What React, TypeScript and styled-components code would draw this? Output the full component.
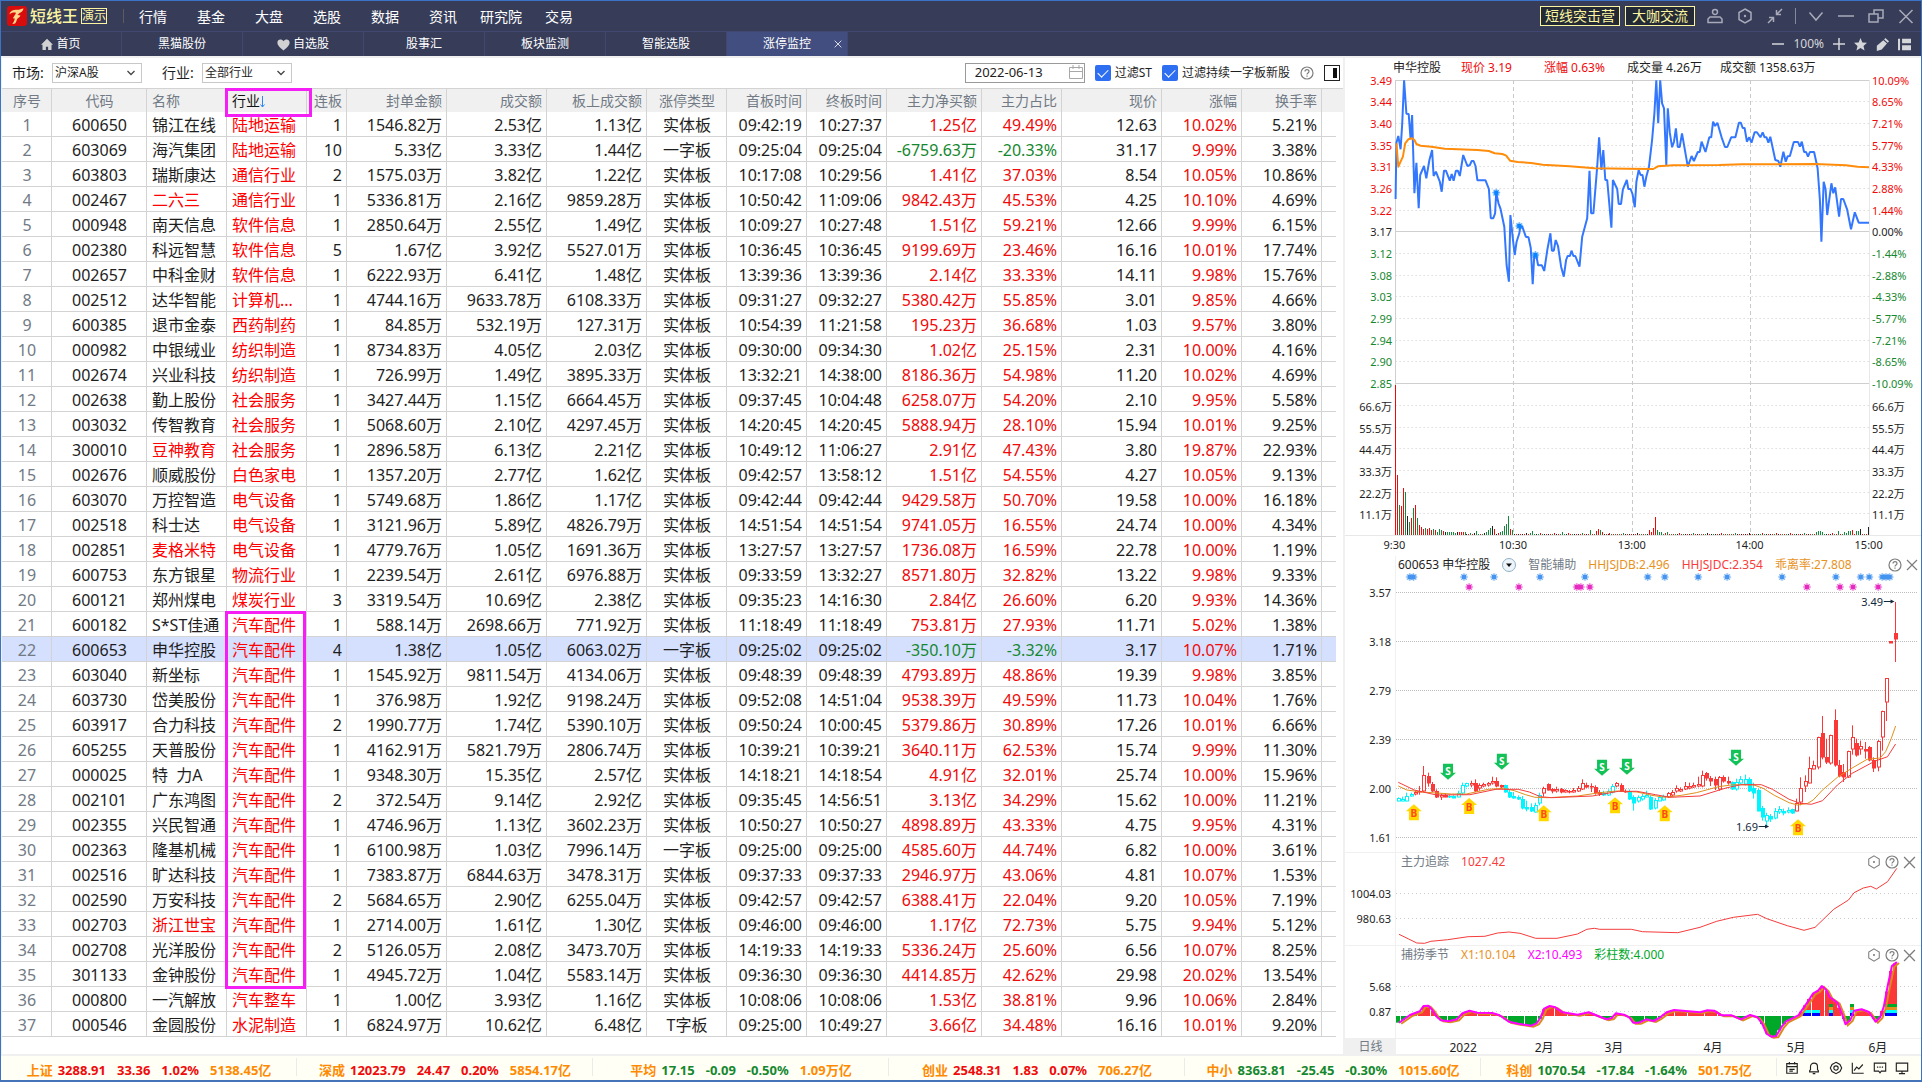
import React from "react";
import styled, { createGlobalStyle } from "styled-components";

/* ---------- palette ---------- */
const C = {
  bar: "#373d59",
  barLine: "#404872",
  tabActive: "#434e80",
  gold: "#fcf5a0",
  line: "#d3d3d3",
  soft: "#f0f0f0",
  text: "#1e1e1e",
  muted: "#717a85",
  up: "#f00a0a",
  down: "#15882f",
  industry: "#ff0000",
  orange: "#ff8a00",
  mark: "#f51ef5",
};

const Global = createGlobalStyle`
  * { box-sizing: border-box; }
  body {
    margin: 0;
    background: #fff;
    color: ${C.text};
    font-family: "Noto Sans", "Noto Sans CJK SC", sans-serif;
    font-size: 12px;
    line-height: 16px;
  }
  button, input, select { font: inherit; color: inherit; margin: 0; }
  button { background: none; border: 0; padding: 0; cursor: pointer; }
  a { color: inherit; text-decoration: none; }
  svg { display: block; }
`;

const Window = styled.div`
  min-height: 100vh;
  display: flex;
  flex-direction: column;
  border: 1px solid #3b74c6;
  border-bottom: 2px solid #4573b8;
`;

/* ---------- top bars ---------- */
const TopBar = styled.header`
  display: flex;
  align-items: center;
  height: 31px;
  background: ${C.bar};
  border-bottom: 1px solid ${C.barLine};
`;

const Brand = styled.div`
  display: flex;
  align-items: center;
  gap: 3px;
  width: 123px;
  padding-left: 6px;
  color: ${C.gold};
  font-size: 16px;
  font-weight: 500;
  border-right: 1px solid #5d5b5e;
  height: 14px;
`;

const DemoTag = styled.span`
  width: 26px;
  border: 1px solid ${C.gold};
  font-size: 12px;
  font-weight: 400;
  line-height: 14px;
  text-align: center;
`;

const Menu = styled.nav`
  display: flex;
  flex: 1;
`;

const MenuLink = styled.a`
  width: 58px;
  padding-top: 2px;
  text-align: center;
  font-size: 14px;
  line-height: 20px;
  color: #fff;
`;

const PromoButton = styled.button<{ $w: number }>`
  width: ${(p) => p.$w}px;
  height: 20px;
  margin-right: 5px;
  border: 1px solid ${C.gold};
  background: #232a35;
  color: ${C.gold};
  font-size: 14px;
  line-height: 18px;
`;

const WinButton = styled.button`
  display: grid;
  place-items: center;
  width: 30px;
  height: 30px;
  color: #a9abb8;
`;

const Rule = styled.span`
  width: 1px;
  height: 16px;
  margin: 0 5px;
  background: #85899a;
`;

const TabBar = styled.nav`
  display: flex;
  height: 24px;
  background: ${C.bar};
`;

const Tab = styled.a<{ $active?: boolean }>`
  position: relative;
  display: flex;
  align-items: center;
  justify-content: center;
  gap: 3px;
  width: 121px;
  color: #fff;
  background: ${(p) => (p.$active ? C.tabActive : "transparent")};
  border-right: 1px solid ${C.barLine};
  > svg { color: #d2d2d2; }
`;

const TabClose = styled.button`
  position: absolute;
  right: 5px;
  top: 8px;
  color: #fff;
`;

const TabTools = styled.div`
  display: flex;
  align-items: center;
  gap: 9px;
  margin-left: auto;
  padding-right: 10px;
  color: #d5d6da;
`;

const ToolButton = styled.button`
  color: #d5d6da;
`;

/* ---------- body layout ---------- */
const Main = styled.main`
  flex: 1;
  display: flex;
  border-top: 2px solid ${C.soft};
  border-left: 1px solid ${C.soft};
`;

const Left = styled.section`
  flex: 1;
  min-width: 0;
`;

const Toolbar = styled.form`
  display: flex;
  align-items: center;
  height: 30px;
  padding: 0 3px 0 10px;
`;

const FieldLabel = styled.label`
  width: 40px;
  font-size: 14px;
`;

const SelectBox = styled.span`
  position: relative;
  width: 90px;
  margin-right: 20px;
  svg {
    position: absolute;
    right: 7px;
    top: 6px;
    color: #444;
    pointer-events: none;
  }
`;

const Select = styled.select`
  display: block;
  appearance: none;
  width: 100%;
  height: 20px;
  padding: 0 2px;
  border: 1px solid #c8c8c8;
  border-radius: 0;
  background: #fff;
`;

const DateBox = styled.span`
  position: relative;
  margin-left: auto;
  margin-right: 10px;
  svg {
    position: absolute;
    right: 2px;
    top: 2px;
  }
`;

const DateInput = styled.input`
  display: block;
  width: 120px;
  height: 20px;
  padding: 0 9px 3px;
  border: 1px solid #9a9a9a;
  font-size: 13px;
`;

const Check = styled.label`
  display: flex;
  align-items: center;
  gap: 4px;
  margin-right: 10px;
`;

const CheckInput = styled.input`
  appearance: none;
  width: 16px;
  height: 16px;
  border-radius: 2px;
  background: #2e6ff2;
  display: grid;
  place-items: center;
  &:checked::after {
    content: "";
    width: 9px;
    height: 5px;
    border: solid #fff;
    border-width: 0 0 1px 1px;
    transform: translateY(-1px) rotate(-45deg);
  }
`;

const IconButton = styled.button`
  color: #7d7d7d;
`;

const PaneToggle = styled.button`
  display: flex;
  justify-content: flex-end;
  align-items: center;
  width: 16px;
  height: 16px;
  margin-left: 10px;
  padding: 2px;
  border: 1px solid #222;
  &::after {
    content: "";
    width: 4px;
    height: 10px;
    background: #111;
  }
`;

/* ---------- stock table ---------- */
const Table = styled.table`
  width: 100%;
  table-layout: fixed;
  border-collapse: separate;
  border-spacing: 0;
  color: ${C.text};
`;

type Align = "left" | "center" | "right";

const Th = styled.th<{ $a: Align; $dark?: boolean }>`
  position: relative;
  height: 24px;
  padding: 0 4px 0 5px;
  background: ${C.soft};
  border-top: 1px solid ${C.line};
  border-right: 1px solid ${C.line};
  color: ${(p) => (p.$dark ? "#111" : C.muted)};
  font-size: 14px;
  font-weight: 400;
  line-height: 22px;
  text-align: ${(p) => p.$a};
  white-space: nowrap;
  &:nth-last-child(-n + 2) {
    border-right: 0;
  }
`;

const SortArrow = styled.svg`
  display: inline-block;
  vertical-align: -2px;
`;

const Row = styled.tr<{ $on?: boolean }>`
  td:not(:last-child) {
    background: ${(p) => (p.$on ? "#d5e0ff" : "transparent")};
    border-bottom: 1px solid ${C.line};
  }
  td:nth-last-child(2) {
    border-right: 0;
  }
`;

const Td = styled.td<{ $a: Align; $c?: string }>`
  position: relative;
  height: 25px;
  padding: 2px 4px 0 5px;
  border-right: 1px solid ${C.line};
  color: ${(p) => p.$c ?? C.text};
  font-size: 16px;
  line-height: 22px;
  text-align: ${(p) => p.$a};
  white-space: pre;
  &:last-child {
    border-right: 0;
  }
`;

const Highlight = styled.span<{ $w: number; $h: number }>`
  position: absolute;
  z-index: 2;
  left: -2px;
  top: -1px;
  width: ${(p) => p.$w}px;
  height: ${(p) => p.$h}px;
  border: 3px solid ${C.mark};
  pointer-events: none;
`;

const COLS: { t: string; w?: number; a: Align }[] = [
  { t: "序号", w: 50, a: "center" },
  { t: "代码", w: 95, a: "center" },
  { t: "名称", w: 80, a: "left" },
  { t: "行业", w: 80, a: "left" },
  { t: "连板", w: 40, a: "right" },
  { t: "封单金额", w: 100, a: "right" },
  { t: "成交额", w: 100, a: "right" },
  { t: "板上成交额", w: 100, a: "right" },
  { t: "涨停类型", w: 80, a: "center" },
  { t: "首板时间", w: 80, a: "right" },
  { t: "终板时间", w: 80, a: "right" },
  { t: "主力净买额", w: 95, a: "right" },
  { t: "主力占比", w: 80, a: "right" },
  { t: "现价", w: 100, a: "right" },
  { t: "涨幅", w: 80, a: "right" },
  { t: "换手率", w: 80, a: "right" },
];

const STOCKS = `600650|锦江在线|陆地运输|1|1546.82万|2.53亿|1.13亿|实体板|09:42:19|10:27:37|1.25亿|49.49%|12.63|10.02%|5.21%
603069|海汽集团|陆地运输|10|5.33亿|3.33亿|1.44亿|一字板|09:25:04|09:25:04|-6759.63万|-20.33%|31.17|9.99%|3.38%
603803|瑞斯康达|通信行业|2|1575.03万|3.82亿|1.22亿|实体板|10:17:08|10:29:56|1.41亿|37.03%|8.54|10.05%|10.86%
002467|二六三|通信行业|1|5336.81万|2.16亿|9859.28万|实体板|10:50:42|11:09:06|9842.43万|45.53%|4.25|10.10%|4.69%
000948|南天信息|软件信息|1|2850.64万|2.55亿|1.49亿|实体板|10:09:27|10:27:48|1.51亿|59.21%|12.66|9.99%|6.15%
002380|科远智慧|软件信息|5|1.67亿|3.92亿|5527.01万|实体板|10:36:45|10:36:45|9199.69万|23.46%|16.16|10.01%|17.74%
002657|中科金财|软件信息|1|6222.93万|6.41亿|1.48亿|实体板|13:39:36|13:39:36|2.14亿|33.33%|14.11|9.98%|15.76%
002512|达华智能|计算机...|1|4744.16万|9633.78万|6108.33万|实体板|09:31:27|09:32:27|5380.42万|55.85%|3.01|9.85%|4.66%
600385|退市金泰|西药制药|1|84.85万|532.19万|127.31万|实体板|10:54:39|11:21:58|195.23万|36.68%|1.03|9.57%|3.80%
000982|中银绒业|纺织制造|1|8734.83万|4.05亿|2.03亿|实体板|09:30:00|09:34:30|1.02亿|25.15%|2.31|10.00%|4.16%
002674|兴业科技|纺织制造|1|726.99万|1.49亿|3895.33万|实体板|13:32:21|14:38:00|8186.36万|54.98%|11.20|10.02%|4.69%
002638|勤上股份|社会服务|1|3427.44万|1.15亿|6664.45万|实体板|09:37:45|10:04:48|6258.07万|54.20%|2.10|9.95%|5.58%
003032|传智教育|社会服务|1|5068.60万|2.10亿|4297.45万|实体板|14:20:45|14:20:45|5888.94万|28.10%|15.94|10.01%|9.25%
300010|豆神教育|社会服务|1|2896.58万|6.13亿|2.21亿|实体板|10:49:12|11:06:27|2.91亿|47.43%|3.80|19.87%|22.93%
002676|顺威股份|白色家电|1|1357.20万|2.77亿|1.62亿|实体板|09:42:57|13:58:12|1.51亿|54.55%|4.27|10.05%|9.13%
603070|万控智造|电气设备|1|5749.68万|1.86亿|1.17亿|实体板|09:42:44|09:42:44|9429.58万|50.70%|19.58|10.00%|16.18%
002518|科士达|电气设备|1|3121.96万|5.89亿|4826.79万|实体板|14:51:54|14:51:54|9741.05万|16.55%|24.74|10.00%|4.34%
002851|麦格米特|电气设备|1|4779.76万|1.05亿|1691.36万|实体板|13:27:57|13:27:57|1736.08万|16.59%|22.78|10.00%|1.19%
600753|东方银星|物流行业|1|2239.54万|2.61亿|6976.88万|实体板|09:33:59|13:32:27|8571.80万|32.82%|13.22|9.98%|9.33%
600121|郑州煤电|煤炭行业|3|3319.54万|10.69亿|2.38亿|实体板|09:35:23|14:16:30|2.84亿|26.60%|6.20|9.93%|14.36%
600182|S*ST佳通|汽车配件|1|588.14万|2698.66万|771.92万|实体板|11:18:49|11:18:49|753.81万|27.93%|11.71|5.02%|1.38%
600653|申华控股|汽车配件|4|1.38亿|1.05亿|6063.02万|一字板|09:25:02|09:25:02|-350.10万|-3.32%|3.17|10.07%|1.71%
603040|新坐标|汽车配件|1|1545.92万|9811.54万|4134.06万|实体板|09:48:39|09:48:39|4793.89万|48.86%|19.39|9.98%|3.85%
603730|岱美股份|汽车配件|1|376.98万|1.92亿|9198.24万|实体板|09:52:08|14:51:04|9538.39万|49.59%|11.73|10.04%|1.76%
603917|合力科技|汽车配件|2|1990.77万|1.74亿|5390.10万|实体板|09:50:24|10:00:45|5379.86万|30.89%|17.26|10.01%|6.66%
605255|天普股份|汽车配件|1|4162.91万|5821.79万|2806.74万|实体板|10:39:21|10:39:21|3640.11万|62.53%|15.74|9.99%|11.30%
000025|特  力A|汽车配件|1|9348.30万|15.35亿|2.57亿|实体板|14:18:21|14:18:54|4.91亿|32.01%|25.74|10.00%|15.96%
002101|广东鸿图|汽车配件|2|372.54万|9.14亿|2.92亿|实体板|09:35:45|14:56:51|3.13亿|34.29%|15.62|10.00%|11.21%
002355|兴民智通|汽车配件|1|4746.96万|1.13亿|3602.23万|实体板|10:50:27|10:50:27|4898.89万|43.33%|4.75|9.95%|4.31%
002363|隆基机械|汽车配件|1|6100.98万|1.03亿|7996.14万|一字板|09:25:00|09:25:00|4585.60万|44.74%|6.82|10.00%|3.61%
002516|旷达科技|汽车配件|1|7383.87万|6844.63万|3478.31万|实体板|09:37:33|09:37:33|2946.97万|43.06%|4.81|10.07%|1.53%
002590|万安科技|汽车配件|2|5684.65万|2.90亿|6255.04万|实体板|09:42:57|09:42:57|6388.41万|22.04%|9.20|10.05%|7.19%
002703|浙江世宝|汽车配件|1|2714.00万|1.61亿|1.30亿|实体板|09:46:00|09:46:00|1.17亿|72.73%|5.75|9.94%|5.12%
002708|光洋股份|汽车配件|2|5126.05万|2.08亿|3473.70万|实体板|14:19:33|14:19:33|5336.24万|25.60%|6.56|10.07%|8.25%
301133|金钟股份|汽车配件|1|4945.72万|1.04亿|5583.14万|实体板|09:36:30|09:36:30|4414.85万|42.62%|29.98|20.02%|13.54%
000800|一汽解放|汽车整车|1|1.00亿|3.93亿|1.16亿|实体板|10:08:06|10:08:06|1.53亿|38.81%|9.96|10.06%|2.84%
000546|金圆股份|水泥制造|1|6824.97万|10.62亿|6.48亿|T字板|09:25:00|10:49:27|3.66亿|34.48%|16.16|10.01%|9.20%`
  .split("\n")
  .map((l) => l.split("|"));

const RED_NAMES = ["002467", "300010", "002851", "002703"];

function cellColor(col: number, value: string, code: string) {
  if (col === 0) return C.muted;
  if (col === 2 && RED_NAMES.includes(code)) return C.industry;
  if (col === 3) return C.industry;
  if (col === 11 || col === 12) return value.startsWith("-") ? C.down : C.up;
  if (col === 14) return C.up;
  return undefined;
}

function StockTable() {
  return (
    <Table>
      <colgroup>
        {COLS.map((c) => (
          <col key={c.t} style={{ width: c.w }} />
        ))}
        <col />
        <col style={{ width: 7 }} />
      </colgroup>
      <thead>
        <tr>
          {COLS.map((c, i) => (
            <Th key={c.t} $a={c.a} $dark={i === 3} scope="col">
              {c.t}
              {i === 3 && (
                <SortArrow width="5" height="12" viewBox="0 0 5 12" fill="none" stroke="#2f86f0">
                  <path d="M2.500 0v11M.5 8.500l2 2.500 2-2.500" />
                </SortArrow>
              )}
              {i === 3 && <Highlight $w={87} $h={29} />}
            </Th>
          ))}
          <Th $a="left" />
          <Th $a="left" />
        </tr>
      </thead>
      <tbody>
        {STOCKS.map((s, r) => {
          const cells = [String(r + 1), ...s];
          return (
            <Row key={s[0]} $on={s[0] === "600653"}>
              {cells.map((v, i) => (
                <Td key={i} $a={COLS[i].a} $c={cellColor(i, v, s[0])}>
                  {v}
                  {i === 3 && s[0] === "600182" && <Highlight $w={81} $h={378} />}
                </Td>
              ))}
              <Td $a="left" />
              <Td $a="left" />
            </Row>
          );
        })}
      </tbody>
    </Table>
  );
}

/* ---------- icons ---------- */
const HexIcon = ({ s = 16, w = 1.5 }: { s?: number; w?: number }) => (
  <svg width={s} height={s} viewBox="0 0 16 16" fill="none" stroke="currentColor" strokeWidth={w}>
    <path d="M8 1l6 3.5v7L8 15l-6-3.5v-7z" />
    <circle cx="8" cy="8" r="1.2" fill="currentColor" stroke="none" />
  </svg>
);
const HelpIcon = () => (
  <svg width="14" height="14" viewBox="0 0 14 14" fill="none" stroke="currentColor" strokeWidth="1.2">
    <circle cx="7" cy="7" r="6" />
    <path d="M5 5.6c0-2.6 4-2.6 4-.2C9 7 7 6.900 7 8.500M7 9.600v1.200" />
  </svg>
);
const CrossIcon = ({ s = 12 }: { s?: number }) => (
  <svg width={s} height={s} viewBox="0 0 12 12" fill="none" stroke="currentColor" strokeWidth="1.200">
    <path d="M1 1l10 10M11 1L1 11" />
  </svg>
);
const Glyph = ({ d, s = 16, w = 1.5, fill }: { d: string; s?: number; w?: number; fill?: boolean }) => (
  <svg
    width={s}
    height={s}
    viewBox="0 0 16 16"
    fill={fill ? "currentColor" : "none"}
    stroke={fill ? "none" : "currentColor"}
    strokeWidth={w}
  >
    <path d={d} />
  </svg>
);
const Logo = () => (
  <svg width="20" height="20" viewBox="0 0 20 20">
    <rect width="20" height="20" rx="3" fill="#d80c0c" />
    <path
      d="M2.500 8.500C3 5 6 3.800 10 3.800c2.500 0 4.500-1 6.500-1.300-.3 2.300-2 3.800-3.700 4.300L10.500 9l3 .6c-.5 1.600-2 2.200-3.200 3.200-.8 1.700-1 3.200-2 4.400-1 .6-2 .8-3 .6 1.700-1.500 2-3.300 2.500-5.300l-2-.2c1-1.900 2.700-3.500 3.200-5.600C6.500 6.300 4.200 6.500 2.500 8.500z"
      fill="#ffd68a"
    />
  </svg>
);

/* ---------- chart pane ---------- */
const Right = styled.aside`
  flex: 0 0 578px;
  border-left: 2px solid ${C.soft};
`;

const QuoteLine = styled.div`
  display: grid;
  grid-template-columns: 68px 83px 83px 93px auto;
  height: 18px;
  padding-left: 48px;
  line-height: 20px;
`;

const PaneHead = styled.div<{ $pad: number; $right: number }>`
  display: flex;
  align-items: center;
  gap: 12px;
  height: 18px;
  padding-left: ${(p) => p.$pad}px;
  padding-right: ${(p) => p.$right}px;
  background: linear-gradient(${C.soft}, ${C.soft}) 50px 0 / 1px 100% no-repeat;
`;

const Tint = styled.span<{ $c: string }>`
  color: ${(p) => p.$c};
`;

const PaneIcons = styled.span`
  display: flex;
  align-items: center;
  gap: 4px;
  margin-left: auto;
  color: #777;
`;

const Chart = styled.svg<{ $ruled?: boolean }>`
  width: 100%;
  height: auto;
  overflow: visible;
  border-bottom: ${(p) => (p.$ruled ? `1px solid ${C.soft}` : "0")};
  font-size: 11px;
`;

const PeriodRow = styled.div`
  display: flex;
  height: 15px;
`;

const Period = styled.button`
  width: 51px;
  background: ${C.soft};
  color: ${C.muted};
`;

const Months = styled.div`
  position: relative;
  flex: 1;
  line-height: 17px;
`;

const Month = styled.span`
  position: absolute;
  transform: translateX(-50%);
`;

type Pt = [number, number];
const pairs = (s: string): Pt[] => s.split(" ").map((p) => p.split(",").map(Number) as Pt);

/* sampled grid -> chart pixels */
const KX = 0.38393;
const tx = (x: number) => x * KX - 25;
const ty = (y: number) => y / 3 - 76;
const JX = 0.37117;
const kx = (x: number) => x * JX - 5;
const ky = (y: number) => y / 3 - 34;
const my = (y: number) => y / 3 - 31;
const by = (y: number) => y / 3 - 124;

const poly = (pts: Pt[], fx: (n: number) => number, fy: (n: number) => number) =>
  pts.map(([x, y]) => `${fx(x).toFixed(1)},${fy(y).toFixed(1)}`).join(" ");

const PRICE = pairs(
  "197,597 199,428 204,408 210,448 214,372 219,241 225,341 231,342 236,418 240,345 246,580 251,488 257,625 261,525 271,498 277,535 285,480 292,450 296,528 302,515 312,545 317,575 323,512 328,512 338,542 343,522 348,542 354,512 359,512 364,528 373,465 384,498 390,496 395,483 400,483 405,498 410,541 431,541 440,567 445,655 451,655 456,640 459,578 465,610 470,625 480,680 486,795 492,845 496,645 502,712 507,765 512,725 519,700 522,678 527,680 536,710 543,712 549,745 554,853 558,770 563,765 568,796 578,796 584,813 592,750 600,700 604,752 609,752 614,720 620,738 628,800 635,830 641,780 645,768 651,768 655,752 660,768 665,768 676,800 683,710 696,655 702,512 706,640 712,640 722,500 727,412 733,510 738,450 743,540 748,540 759,683 763,540 774,567 778,612 784,612 789,568 799,540 803,567 809,567 814,582 820,622 824,545 830,510 835,525 840,525 845,560 850,530 857,500 865,420 871,340 876,241 881,370 886,241 891,310 896,325 902,495 906,325 911,398 917,442 922,425 927,385 932,441 937,441 943,400 958,500 968,468 974,483 984,456 989,456 994,425 1004,456 1014,412 1019,412 1024,365 1029,378 1035,368 1046,412 1055,441 1061,441 1071,412 1082,412 1091,368 1096,368 1101,384 1106,384 1112,425 1118,412 1124,428 1132,397 1138,397 1147,412 1153,397 1158,412 1163,412 1168,428 1173,410 1186,480 1194,483 1199,500 1207,455 1213,485 1218,469 1224,468 1234,426 1245,426 1250,440 1255,425 1261,456 1266,456 1271,470 1276,456 1287,456 1296,505 1302,600 1306,725 1312,545 1317,568 1321,645 1332,550 1337,580 1342,562 1352,650 1357,597 1363,597 1373,628 1383,688 1393,637 1403,668 1430,668"
);
const AVERAGE = pairs(
  "199,430 204,500 216,470 222,430 230,418 240,415 246,420 251,432 262,437 290,440 325,446 410,450 440,453 455,460 475,462 485,467 495,482 515,486 550,489 580,494 650,499 715,505 800,506 868,507 880,499 920,496 1040,495 1100,493 1290,492 1370,496 1400,500 1430,502"
);
const LEFT_AXIS = "3.49 3.44 3.40 3.35 3.31 3.26 3.22 3.17 3.12 3.08 3.03 2.99 2.94 2.90 2.85".split(" ");
const RIGHT_AXIS =
  "10.09% 8.65% 7.21% 5.77% 4.33% 2.88% 1.44% 0.00% -1.44% -2.88% -4.33% -5.77% -7.21% -8.65% -10.09%".split(" ");
const VOL_AXIS = ["66.6万", "55.5万", "44.4万", "33.3万", "22.2万", "11.1万"];

/* slot -> bar height and colour; slots left out get a minimal bar */
const VOL_PEAKS: Record<number, [number, string]> = {
  0: [150, "r"], 1: [60, "r"], 2: [30, "g"], 3: [29, "r"], 4: [47, "r"], 5: [43, "g"], 6: [19, "k"], 7: [13, "g"],
  8: [17, "r"], 9: [27, "g"], 10: [30, "r"], 11: [17, "g"], 12: [10, "r"], 13: [8, "r"], 14: [6, "r"], 15: [7, "g"],
  16: [6, "r"], 17: [7, "r"], 18: [5, "r"], 19: [6, "g"], 20: [5, "r"], 21: [3, "g"], 22: [6, "g"], 23: [5, "g"],
  24: [4, "r"], 25: [3, "k"], 26: [3, "g"], 27: [3, "g"], 28: [3, "g"], 29: [3, "g"], 30: [2, "g"], 31: [3, "k"],
  32: [3, "r"], 33: [3, "r"], 34: [3, "r"], 35: [3, "g"], 40: [2, "k"], 41: [4, "g"], 46: [3, "g"], 47: [5, "g"],
  48: [7, "g"], 49: [9, "k"], 50: [6, "r"], 53: [3, "g"], 54: [4, "g"], 55: [9, "g"], 56: [11, "g"], 57: [19, "g"],
  58: [6, "r"], 59: [5, "g"], 68: [2, "g"], 69: [4, "g"], 84: [3, "g"], 98: [5, "g"], 101: [4, "r"], 102: [6, "r"],
  103: [5, "g"], 104: [3, "r"], 128: [5, "r"], 129: [3, "r"], 130: [7, "r"], 131: [18, "r"], 132: [5, "g"],
  133: [3, "g"], 134: [3, "g"], 137: [3, "g"], 212: [3, "g"], 213: [4, "g"], 214: [4, "g"], 215: [3, "g"],
  220: [2, "r"], 223: [4, "g"], 226: [3, "g"], 228: [4, "g"], 229: [4, "g"], 230: [5, "r"], 232: [4, "g"],
  233: [4, "g"], 234: [6, "k"], 238: [8, "k"],
};
const VOL_COLORS: Record<string, string> = { r: "#ee0a0a", g: "#138a3c", k: "#222" };

const Spark = ({ x, y, c }: { x: number; y: number; c: string }) => (
  <g>
    <circle cx={x} cy={y} r="3.500" fill={c} opacity="0.35" />
    <path d={`M${x - 4} ${y}h8M${x} ${y - 4}v8M${x - 3} ${y - 3}l6 6M${x + 3} ${y - 3}l-6 6`} stroke={c} opacity="0.5" />
    <rect x={x - 2} y={y - 2} width="4" height="4" fill={c} />
  </g>
);

function Intraday() {
  const x0 = tx(197);
  const x1 = tx(1431);
  const step = (383.3 - 80.3) / 14;
  return (
    <Chart viewBox="0 0 576 480" role="img" aria-label="分时走势">
      {LEFT_AXIS.map((v, i) => {
        const y = Math.floor(4.3 + i * step) + 0.5;
        const solid = i % 7 === 0;
        const c = i < 7 ? C.up : i === 7 ? C.text : C.down;
        return (
          <g key={v}>
            <line x1={x0} x2={x1} y1={y} y2={y} stroke={solid ? "#cfcfcf" : "#cccccc"} strokeDasharray={solid ? undefined : "1 3"} />
            <text x="47" y={y + 4} textAnchor="end" fill={c}>{v}</text>
            <text x="527" y={y + 4} fill={c}>{RIGHT_AXIS[i]}</text>
          </g>
        );
      })}
      {VOL_AXIS.map((v, i) => {
        const y = Math.floor(329.7 + i * 21.6) + 0.5;
        return (
          <g key={v} fill={C.text}>
            <line x1={x0} x2={x1} y1={y} y2={y} stroke="#cccccc" strokeDasharray="1 3" />
            <text x="47" y={y + 5} textAnchor="end">{v}</text>
            <text x="527" y={y + 5}>{v}</text>
          </g>
        );
      })}
      {[504, 814, 1121].map((x) => (
        <line key={x} x1={Math.floor(tx(x)) + 0.5} x2={Math.floor(tx(x)) + 0.5} y1="4" y2="459" stroke="#c9c9c9" strokeDasharray="4 3" />
      ))}
      <line x1="50.5" x2="50.5" y1="4" y2="459" stroke="#cfcfcf" />
      <line x1="524.5" x2="524.5" y1="4" y2="459" stroke="#e8e8e8" />
      <line x1="0" x2="576" y1="459.5" y2="459.5" stroke="#e8e8e8" />
      {Array.from({ length: 239 }, (_, i) => {
        const filler: [number, string] = [i % 7 === 3 ? 2 : 1, "rgkrrgk"[(i * 5 + (i >> 3)) % 7]];
        const [h, c] = VOL_PEAKS[i] ?? filler;
        return <rect key={i} x={Math.round(50 + i * 1.986)} y={459 - h} width="1" height={h} fill={VOL_COLORS[c]} />;
      })}
      <polyline points={poly(PRICE, tx, ty)} fill="none" stroke="#3377ff" strokeWidth="2" strokeLinejoin="bevel" />
      <polyline points={poly(AVERAGE, tx, ty)} fill="none" stroke="#ff8c0a" strokeWidth="2" strokeLinejoin="round" />
      {[[459, 578], [519, 678], [561, 765]].map(([x, y]) => (
        <Spark key={x} x={tx(x)} y={ty(y)} c="#0a84ff" />
      ))}
      {[["9:30", 194], ["10:30", 503], ["13:00", 812], ["14:00", 1119], ["15:00", 1429]].map(([t, x]) => (
        <text key={t} x={tx(x as number)} y="473" textAnchor="middle" fill={C.text}>{t}</text>
      ))}
    </Chart>
  );
}

/* candles: high, body top, body bottom, low, kind (upper case = filled, c = cyan, r = red) */
const CANDLES = `772,775,782,784,c 770,776,782,784,c 758,768,782,784,c 758,762,768,770,c 752,757,762,766,r 738,752,756,764,r 678,706,754,756,r 698,708,730,740,R 726,732,752,756,R 748,752,772,774,R 760,766,772,780,r 760,764,770,772,R 764,767,772,774,C 766,768,773,774,C 752,758,770,772,c 728,734,758,764,c 728,730,738,742,c 722,730,736,742,r 718,730,752,756,R 730,736,744,752,r 728,732,737,742,r 726,729,735,740,r 710,724,730,734,r 712,724,738,742,R 734,736,740,744,R 734,736,756,758,C 750,756,770,774,C 756,768,774,776,C 766,770,776,780,C 768,778,804,808,C 782,800,806,814,C 790,800,814,816,C 788,796,816,818,c 758,766,788,796,c 740,744,760,770,r 730,732,750,752,R 744,747,752,760,R 740,748,754,758,r 744,746,756,760,R 748,750,756,758,r 750,752,756,760,R 744,750,756,758,r 738,744,752,756,r 718,730,746,750,r 728,736,742,744,R 730,738,742,756,r 736,740,760,764,R 750,756,762,768,R 752,758,766,768,C 748,754,764,768,c 732,738,756,760,c 726,730,738,742,r 730,734,752,756,R 748,752,756,758,R 748,752,776,780,C 766,770,790,812,C 766,772,782,788,c 762,768,778,782,c 752,764,770,772,c 766,770,806,810,C 774,780,804,808,c 766,772,782,784,c 764,768,780,782,c 756,760,770,774,r 750,756,764,770,r 736,744,752,758,r 742,746,752,756,r 726,738,746,750,r 728,738,744,748,r 728,734,742,744,r 710,732,738,742,r 692,704,738,742,r 696,700,714,722,R 708,714,724,738,R 710,718,734,750,R 708,710,748,752,r 706,710,724,728,R 710,722,730,734,R 724,726,746,750,C 716,726,746,752,c 708,718,728,732,c 704,718,732,736,c 712,718,752,756,C 728,744,758,776,C 746,750,812,814,C 798,804,832,842,C 818,826,844,860,c 822,828,836,846,C 804,812,834,838,c 798,806,816,822,c 806,812,818,826,C 802,810,816,820,c 806,808,818,822,C 776,788,812,814,r 712,744,786,796,r 706,724,738,756,r 650,684,728,730,r 662,676,686,688,r 590,592,680,688,r 528,580,652,658,R 596,650,666,672,R 584,586,668,674,r 508,540,676,680,R 660,674,708,712,R 672,696,712,726,R 632,634,710,714,r 556,592,626,644,r 596,610,646,650,R 602,618,626,644,r 606,626,632,656,R 618,622,660,664,R 652,660,684,696,R 600,604,682,694,r 512,514,590,632,r 414,415,485,543,r 304,304,308,308,R 186,280,298,366,R`
  .split(" ")
  .map((s) => s.split(","));

const MA_FAST = pairs(
  "157,738 180,750 220,756 300,762 340,762 400,748 440,745 470,752 500,764 525,772 560,773 640,768 700,758 745,753 800,756 840,766 875,772 920,766 960,758 1020,740 1060,734 1115,735 1140,745 1170,766 1210,788 1232,795 1260,790 1275,780 1300,750 1340,712 1380,684 1420,658 1455,654 1470,635 1485,596 1497,558"
);
const MA_SLOW = pairs(
  "157,727 200,750 260,765 350,764 420,748 480,748 510,756 540,770 570,773 680,768 750,754 800,754 850,764 890,772 970,768 1040,744 1080,734 1135,734 1165,748 1210,778 1240,790 1270,793 1300,782 1340,735 1380,700 1440,664 1475,650 1497,612"
);
const BLUE_DOTS = [188, 198, 334, 415, 539, 660, 829, 875, 965, 1043, 1191, 1336, 1403, 1426, 1461, 1471, 1481];
const PINK_DOTS = [348, 482, 638, 649, 673, 1258, 1347, 1382, 1450];
const SELLS = pairs("291,695 436,665 706,683 773,680 1067,653");
const BUYS = pairs("199,817 348,798 549,820 741,796 875,820 1234,862");

function Candles() {
  return (
    <Chart viewBox="0 0 576 278" role="img" aria-label="日K线" $ruled>
      <line x1="50.5" x2="50.5" y1="0" y2="278" stroke={C.soft} />
      {["3.57", "3.18", "2.79", "2.39", "2.00", "1.61"].map((v, i) => {
        const y = Math.floor(ky(157 + i * 147)) + 0.5;
        return (
          <g key={v}>
            <line x1="51" x2="573" y1={y} y2={y} stroke="#bdbdbd" strokeDasharray="1 1" />
            <text x="46" y={y + 4} textAnchor="end" fill={C.text}>{v}</text>
          </g>
        );
      })}
      {BLUE_DOTS.map((x) => <Spark key={x} x={kx(x)} y={ky(111)} c="#4494f0" />)}
      {PINK_DOTS.map((x) => <Spark key={x} x={kx(x)} y={ky(141)} c="#e62cc0" />)}
      {CANDLES.map(([h, t, b, l, k], i) => {
        const x = Math.round(kx(157 + i * 11.54) - 0.5) + 0.5;
        const c = k.toLowerCase() === "c" ? "#00f5ff" : "#fa3838";
        const top = Math.round(ky(+t));
        const bottom = Math.max(Math.round(ky(+b)), top + 1);
        const filled = k === k.toUpperCase();
        return (
          <g key={i} stroke={c}>
            <line x1={x} x2={x} y1={ky(+h)} y2={ky(+l)} />
            <rect x={x - 1} y={top + 0.5} width="3" height={bottom - top - 0.5} fill={filled ? c : "#fff"} />
          </g>
        );
      })}
      <polyline points={poly(MA_FAST, kx, ky)} fill="none" stroke="#e0901c" />
      <polyline points={poly(MA_SLOW, kx, ky)} fill="none" stroke="#f53c3c" />
      <g fontSize="10" fontWeight="700" textAnchor="middle">
        {SELLS.map(([x, y]) => (
          <g key={x} transform={`translate(${kx(x)} ${ky(y)})`}>
            <path d="M-5-8H5V1H8L0 8L-8 1H-5z" fill="#13c257" />
            <text y="3" fill="#fff">S</text>
          </g>
        ))}
        {BUYS.map(([x, y]) => (
          <g key={x} transform={`translate(${kx(x)} ${ky(y)})`}>
            <path d="M-5 8H5V-1H8L0-8L-8-1H-5z" fill="#ffd800" />
            <text y="5" fill="#ff4a1c">B</text>
          </g>
        ))}
      </g>
      <g fill="#14283c">
        <text x={kx(1463)} y={ky(185) + 4} textAnchor="end">3.49</text>
        <text x={kx(1126)} y={ky(860) + 4} textAnchor="end">1.69</text>
        <path d={`M${kx(1465)} 27.500h9M${kx(1128)} 252.500h9`} stroke="#14283c" />
        <path d={`M${kx(1494)} 27.500l-4-2v4zM${kx(1156)} 252.500l-4-2v4z`} />
      </g>
    </Chart>
  );
}

const FORCE = pairs(
  "159,283 185,297 207,309 228,310 245,304 290,299 345,290 390,289 425,279 455,276 485,280 527,295 585,295 640,282 665,268 685,265 700,268 785,268 815,275 910,278 970,262 1015,244 1060,232 1125,223 1150,236 1205,257 1250,271 1280,262 1330,208 1370,180 1385,158 1410,144 1430,139 1445,147 1475,125 1500,85"
);
const SEASON = pairs(
  "159,548 190,524 215,514 225,498 238,497 247,508 262,532 272,541 292,544 315,538 330,520 349,512 370,518 410,519 430,526 455,545 480,551 515,557 530,550 540,533 550,506 565,498 580,502 600,517 640,524 670,517 690,526 718,538 732,534 743,520 765,524 780,533 790,548 805,548 825,538 845,543 860,534 880,517 900,510 970,517 990,511 1008,512 1028,526 1055,526 1080,538 1105,525 1125,532 1137,550 1150,582 1162,590 1175,588 1190,560 1202,544 1235,526 1260,485 1275,460 1288,452 1298,438 1310,450 1320,472 1340,488 1352,520 1362,553 1375,540 1385,512 1405,508 1425,516 1443,545 1455,532 1465,500 1475,440 1487,378 1500,366"
);

const Grid = ({ ys, labels, fy }: { ys: number[]; labels: string[]; fy: (n: number) => number }) => (
  <>
    <line x1="50.5" x2="50.5" y1="0" y2="74" stroke={C.soft} />
    {ys.map((v, i) => {
      const y = Math.floor(fy(v)) + 0.5;
      return (
        <g key={v}>
          <line x1="51" x2="573" y1={y} y2={y} stroke="#cccccc" strokeDasharray="1 3" />
          <text x="46" y={y + 4} textAnchor="end" fill={C.text}>{labels[i]}</text>
        </g>
      );
    })}
  </>
);

function Force() {
  return (
    <Chart viewBox="0 0 576 74" role="img" aria-label="主力追踪" $ruled>
      <Grid ys={[160, 235]} labels={["1004.03", "980.63"]} fy={my} />
      <polyline points={poly(FORCE, kx, my)} fill="none" stroke="#f53c3c" />
    </Chart>
  );
}

function valueAt(pts: Pt[], x: number) {
  const i = pts.findIndex((p) => p[0] >= x);
  if (i <= 0) return pts[i < 0 ? pts.length - 1 : 0][1];
  const [ax, ay] = pts[i - 1];
  const [bx, byy] = pts[i];
  return ay + ((byy - ay) * (x - ax)) / (bx - ax);
}

function Season() {
  const base = 52;
  const stack = (i: number) => {
    if (i >= 114) return ["#0000ff", "#00ffff", "#e0901c", "#00a82a"];
    if (i >= 95 && i <= 98) return ["#0000ff", "#00ffff"];
    if (i === 101 || i === 106) return ["#0000ff", "#00ffff", "#e0901c", "#00a82a"];
    return [];
  };
  return (
    <Chart viewBox="0 0 576 74" role="img" aria-label="捕捞季节" $ruled>
      <Grid ys={[439, 514]} labels={["5.68", "0.87"]} fy={by} />
      {Array.from({ length: 117 }, (_, i) => {
        const sx = 157 + i * 11.54;
        const y = by(valueAt(SEASON, sx));
        const x = Math.round(kx(sx)) - 2;
        const up = y < base;
        return (
          <g key={i}>
            <rect x={x} y={up ? y : base} width="4" height={Math.abs(base - y)} fill={up ? "#fa3838" : "#00a82a"} />
            {stack(i).map((c, k) => (
              <rect key={c} x={x} y={base - 3 * (k + 1)} width="4" height="3" fill={c} />
            ))}
          </g>
        );
      })}
      <polyline points={poly(SEASON.map(([x, y]) => [x + 6, y + 3] as Pt), kx, by)} fill="none" stroke="#dc8a1e" strokeWidth="2" />
      <polyline points={poly(SEASON, kx, by)} fill="none" stroke="#ff00ff" strokeWidth="2" strokeLinejoin="round" />
    </Chart>
  );
}

const IndicatorIcons = () => (
  <PaneIcons>
    <IconButton aria-label="设置"><HexIcon s={14} w={1.2} /></IconButton>
    <IconButton aria-label="帮助"><HelpIcon /></IconButton>
    <IconButton aria-label="关闭"><CrossIcon s={13} /></IconButton>
  </PaneIcons>
);

/* ---------- status bar ---------- */
const Status = styled.footer`
  display: flex;
  height: 26px;
  border-top: 2px solid ${C.soft};
  background: #fffff6;
`;

const IndexItem = styled.div<{ $c: string }>`
  flex: 0 1 296px;
  display: flex;
  justify-content: center;
  align-items: center;
  gap: 11px;
  padding-top: 4px;
  color: ${(p) => p.$c};
  font-size: 13px;
  font-weight: 700;
  white-space: nowrap;
  background: linear-gradient(#ebebeb, #ebebeb) 100% 2px / 1px 18px no-repeat;
`;

const IndexName = styled.span`
  margin-right: -6px;
  color: ${C.orange};
`;

const StatusIcons = styled.div`
  display: flex;
  align-items: center;
  margin-left: auto;
  padding-right: 8px;
`;

const StatusButton = styled.button`
  display: grid;
  place-items: center;
  width: 22px;
  color: #222;
`;

const INDEXES = [
  ["上证", "3288.91", "33.36", "1.02%", "5138.45亿"],
  ["深成", "12023.79", "24.47", "0.20%", "5854.17亿"],
  ["平均", "17.15", "-0.09", "-0.50%", "1.09万亿"],
  ["创业", "2548.31", "1.83", "0.07%", "706.27亿"],
  ["中小", "8363.81", "-25.45", "-0.30%", "1015.60亿"],
  ["科创", "1070.54", "-17.84", "-1.64%", "501.75亿"],
];

const STATUS_ICONS: [string, string][] = [
  ["日历", "M2 3h12v11H2zM2 6.500h12M5 1v3M11 1v3M5 9.500h6M5 11.500h4"],
  ["提醒", "M3 12.500V11l1-1V6.500a4 4 0 018 0V10l1 1v1.500zM6.500 14.500h3"],
  ["关注", "M8 1.500L12.500 4 14.500 8 12.500 12 8 14.500 3.500 12 1.500 8 3.500 4zM8 5.500a2.500 2.500 0 100 5 2.500 2.500 0 000-5z"],
  ["走势", "M1.500 2v12h13M3.500 11l3-4 2.500 2 4.500-5"],
  ["消息", "M1.500 2.500h13v9H9.500L8 13.500 6.500 11.500h-5zM4.500 7h1.500M7.300 7h1.500M10 7h1.500"],
  ["屏幕", "M1.500 2.500h13v9h-13zM8 11.500v3M4.500 14.500h7"],
];

export default function App() {
  return (
    <>
      <Global />
      <Window>
        <TopBar>
          <Brand>
            <Logo />
            短线王
            <DemoTag>演示</DemoTag>
          </Brand>
          <Menu>
            {["行情", "基金", "大盘", "选股", "数据", "资讯", "研究院", "交易"].map((m) => (
              <MenuLink key={m} href="#">{m}</MenuLink>
            ))}
          </Menu>
          <PromoButton $w={80}>短线突击营</PromoButton>
          <PromoButton $w={70}>大咖交流</PromoButton>
          <WinButton aria-label="用户"><Glyph d="M8 1.500a2.500 2.500 0 100 5 2.500 2.500 0 000-5zM1 14.500v-3.500l2-2h10l2 2v3.500z" /></WinButton>
          <WinButton aria-label="设置"><HexIcon /></WinButton>
          <WinButton aria-label="收起"><Glyph d="M15 1L9.500 6.500M9.500 2v4.500H14M1 15l5.500-5.500M2 9.500h4.500V14" /></WinButton>
          <Rule />
          <WinButton aria-label="更多"><Glyph d="M1.500 4.500L8 12l6.500-7.500" /></WinButton>
          <WinButton aria-label="最小化"><Glyph d="M0 8h16" /></WinButton>
          <WinButton aria-label="还原"><Glyph d="M1 6h9v8H1zM6 6V2h9v8h-5" /></WinButton>
          <WinButton aria-label="关闭窗口"><Glyph d="M1.500 2l13 13M14.500 2l-13 13" /></WinButton>
        </TopBar>

        <TabBar>
          <Tab href="#">
            <Glyph s={12} fill d="M8 1L0 9h2v7h4.500v-4.500h3V16H14V9h2z" />
            首页
          </Tab>
          <Tab href="#">黑猫股份</Tab>
          <Tab href="#">
            <Glyph s={13} fill d="M8 15.500C3 11 .5 9 .5 5.500.5 1 6 .5 8 4c2-3.500 7.500-3 7.500 1.500C15.500 9 13 11 8 15.500z" />
            自选股
          </Tab>
          <Tab href="#">股事汇</Tab>
          <Tab href="#">板块监测</Tab>
          <Tab href="#">智能选股</Tab>
          <Tab as="div" $active>
            涨停监控
            <TabClose aria-label="关闭标签"><CrossIcon s={8} /></TabClose>
          </Tab>
          <TabTools>
            <ToolButton aria-label="缩小"><Glyph s={12} w={2} d="M0 8h16" /></ToolButton>
            <span>100%</span>
            <ToolButton aria-label="放大"><Glyph s={12} w={2} d="M0 8h16M8 0v16" /></ToolButton>
            <ToolButton aria-label="收藏"><Glyph s={13} fill d="M8 0l2.300 5.400 5.700.5-4.300 3.800L13 15.500 8 12.400 3 15.500l1.300-5.800L0 5.900l5.700-.5z" /></ToolButton>
            <ToolButton aria-label="编辑"><Glyph s={13} fill d="M11.500 0L16 4l-1.500 1.700-4.500-4zM9 2.800l4.500 4L7 14l-6 2V9.500z" /></ToolButton>
            <ToolButton aria-label="布局"><Glyph s={13} fill d="M0 1h2.500v14H0zM5 1h11v5.500H5zM5 9h11v6H5z" /></ToolButton>
          </TabTools>
        </TabBar>

        <Main>
          <Left>
            <Toolbar>
              <FieldLabel htmlFor="market">市场:</FieldLabel>
              <SelectBox>
                <Select id="market"><option>沪深A股</option></Select>
                <Glyph s={8} w={2.5} d="M1 4l7 7 7-7" />
              </SelectBox>
              <FieldLabel htmlFor="industry">行业:</FieldLabel>
              <SelectBox>
                <Select id="industry"><option>全部行业</option></Select>
                <Glyph s={8} w={2.5} d="M1 4l7 7 7-7" />
              </SelectBox>
              <DateBox>
                <DateInput aria-label="日期" defaultValue="2022-06-13" />
                <svg width="14" height="14" viewBox="0 0 14 14" fill="none" stroke="#a8a8a8">
                  <path d="M.5 2.500h13v11H.5zM.5 6.500h13M4 0v4M10 0v4" />
                </svg>
              </DateBox>
              <Check><CheckInput type="checkbox" defaultChecked />过滤ST</Check>
              <Check><CheckInput type="checkbox" defaultChecked />过滤持续一字板新股</Check>
              <IconButton type="button" aria-label="说明"><HelpIcon /></IconButton>
              <PaneToggle type="button" aria-label="切换侧栏" />
            </Toolbar>
            <StockTable />
          </Left>

          <Right>
            <QuoteLine>
              <span>申华控股</span>
              <Tint $c={C.up}>现价 3.19</Tint>
              <Tint $c={C.up}>涨幅 0.63%</Tint>
              <span>成交量 4.26万</span>
              <span>成交额 1358.63万</span>
            </QuoteLine>
            <Intraday />
            <PaneHead $pad={53} $right={3}>
              <span>600653 申华控股</span>
              <IconButton aria-label="切换股票">
                <svg width="14" height="14" viewBox="0 0 14 14">
                  <circle cx="7" cy="7" r="6.500" fill="#eef5fa" stroke="#8fb0c4" />
                  <path d="M4 5.500h6L7 9z" fill="#111" />
                </svg>
              </IconButton>
              <Tint $c={C.muted}>智能辅助</Tint>
              <Tint $c="#e8921e">HHJSJDB:2.496</Tint>
              <Tint $c="#fa3c3c">HHJSJDC:2.354</Tint>
              <Tint $c="#e8921e">乖离率:27.808</Tint>
              <PaneIcons>
                <IconButton aria-label="帮助"><HelpIcon /></IconButton>
                <IconButton aria-label="关闭"><CrossIcon /></IconButton>
              </PaneIcons>
            </PaneHead>
            <Candles />
            <PaneHead $pad={56} $right={5}>
              <Tint $c={C.muted}>主力追踪</Tint>
              <Tint $c="#fa3c3c">1027.42</Tint>
              <IndicatorIcons />
            </PaneHead>
            <Force />
            <PaneHead $pad={56} $right={5}>
              <Tint $c={C.muted}>捕捞季节</Tint>
              <Tint $c="#e8921e">X1:10.104</Tint>
              <Tint $c="#ff00ff">X2:10.493</Tint>
              <Tint $c="#00a82a">彩柱数:4.000</Tint>
              <IndicatorIcons />
            </PaneHead>
            <Season />
            <PeriodRow>
              <Period>日线</Period>
              <Months>
                {[["2022", 332], ["2月", 550], ["3月", 738], ["4月", 1005], ["5月", 1229], ["6月", 1449]].map(([t, x]) => (
                  <Month key={t} style={{ left: `${((kx(x as number) - 51) / 525) * 100}%` }}>{t}</Month>
                ))}
              </Months>
            </PeriodRow>
          </Right>
        </Main>

        <Status>
          {INDEXES.map(([name, price, diff, pct, vol]) => (
            <IndexItem key={name} $c={diff.startsWith("-") ? C.down : C.up}>
              <IndexName>{name}</IndexName>
              <span>{price}</span>
              <span>{diff}</span>
              <span>{pct}</span>
              <Tint $c={C.orange}>{vol}</Tint>
            </IndexItem>
          ))}
          <StatusIcons>
            {STATUS_ICONS.map(([label, d]) => (
              <StatusButton key={label} aria-label={label}>
                <Glyph s={14} w={1.3} d={d} />
              </StatusButton>
            ))}
          </StatusIcons>
        </Status>
      </Window>
    </>
  );
}
